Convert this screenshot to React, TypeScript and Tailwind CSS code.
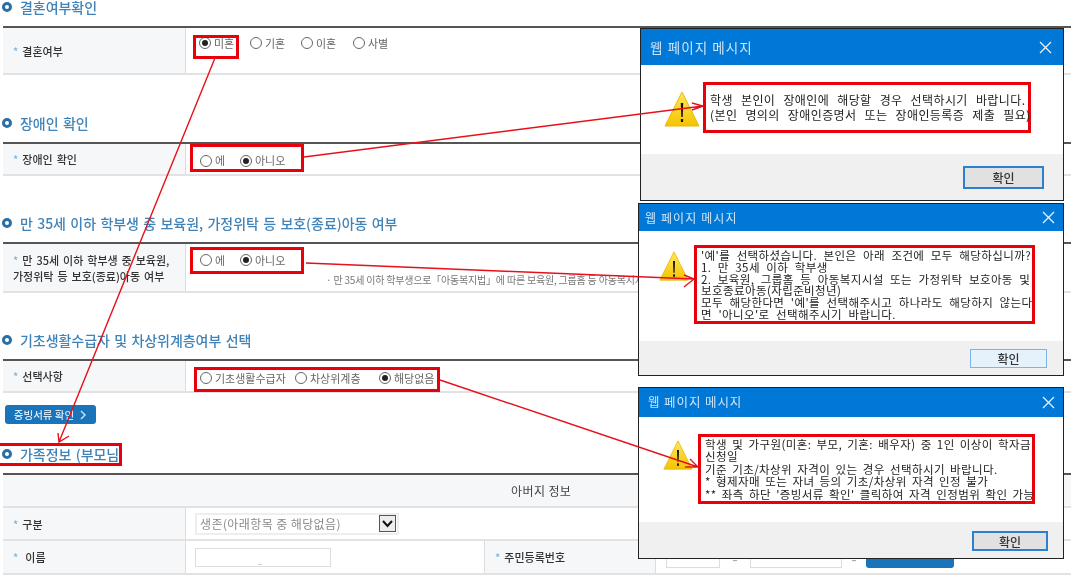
import type { ReactNode } from 'react'

const font = { fontFamily: '"Noto Sans CJK KR", "Noto Sans", sans-serif' }

function Heading({ children, className = '' }: { children: ReactNode; className?: string }) {
  return (
    <div className={`flex h-5 items-center pl-[2px] mb-[9px] ${className}`}>
      <span className="h-[10px] w-[10px] rounded-full border-[3px] border-[#2a6ea6]" />
      <span className="ml-2 whitespace-nowrap text-[14px] font-medium tracking-[-0.05px] [word-spacing:1.3px] text-[#3f83b8]">{children}</span>
    </div>
  )
}

function Radio({ label, checked, className = '' }: { label: string; checked?: boolean; className?: string }) {
  return (
    <div className={`flex items-center ${className}`}>
      <span className="flex h-[12px] w-[12px] shrink-0 items-center justify-center rounded-full border border-[#666] bg-white">
        {checked && <span className="h-[6px] w-[6px] rounded-full bg-[#222]" />}
      </span>
      <span className="ml-[3px] whitespace-nowrap text-[11px] tracking-[0px] text-[#666]">{label}</span>
    </div>
  )
}

function Label({ children, className = 'w-[183px]' }: { children: ReactNode; className?: string }) {
  return (
    <div className={`flex shrink-0 items-center border-r border-[#ddd] bg-[#f6f7f9] pl-[10px] text-[11px] font-medium leading-[16px] [word-spacing:1.5px] text-[#333] ${className}`}>
      <div>
        <span className="mr-[4px] text-[#7db4d8]">*</span>
        {children}
      </div>
    </div>
  )
}

function Row({ children, className = '' }: { children: ReactNode; className?: string }) {
  return <div className={`flex border-b-2 border-[#e2e2e2] ${className}`}>{children}</div>
}

function Warning({ className = '' }: { className?: string }) {
  return (
    <svg viewBox="0 0 36 36" className={`shrink-0 ${className}`}>
      <defs>
        <linearGradient id="warn" x1="0" y1="0" x2="0" y2="1">
          <stop offset="0" stopColor="#ffe85a" />
          <stop offset="1" stopColor="#f5c400" />
        </linearGradient>
      </defs>
      <path d="M18 1 L35 35 L1 35 Z" fill="url(#warn)" stroke="#e3b90f" strokeWidth="1" strokeLinejoin="round" />
      <path d="M16.8 12 h2.4 l-.5 14 h-1.4 Z" fill="#111" />
      <rect x="16.9" y="28" width="2.2" height="3" fill="#111" />
    </svg>
  )
}

function Dialog({
  className,
  titleClass,
  bodyClass,
  footerClass,
  buttonClass,
  titleText,
  children,
  icon,
}: {
  className: string
  titleClass: string
  bodyClass: string
  footerClass: string
  buttonClass: string
  titleText: string
  children: ReactNode
  icon: ReactNode
}) {
  return (
    <div className={`absolute flex flex-col border border-[#222] bg-white ${className}`}>
      <div className={`flex items-center justify-between bg-[#0078d7] ${titleClass}`}>
        <span className={`text-[#cfe4f7] ${titleText}`}>웹 페이지 메시지</span>
        <svg width="13" height="13" viewBox="0 0 13 13" stroke="#e8f2fb" strokeWidth="1.3" fill="none">
          <path d="M1 1 L12 12 M12 1 L1 12" />
        </svg>
      </div>
      <div className={`flex ${bodyClass}`}>
        {icon}
        {children}
      </div>
      <div className={`flex justify-end bg-[#f0f0f0] ${footerClass}`}>
        <button className={`text-[12px] font-medium text-[#333] ${buttonClass}`}>확인</button>
      </div>
    </div>
  )
}

export default function App() {
  const msg = 'border-[3px] border-[#e8000b] text-[#222] whitespace-nowrap'
  const box = 'absolute border-[3px] border-[#e8000b]'
  return (
    <div className="relative h-[577px] w-[1071px] overflow-hidden bg-white blur-[0.3px]" style={font}>
      <div className="-mt-[3px] flex flex-col pl-[3px]">
        <Heading className="-ml-[3px]">결혼여부확인</Heading>
        <div className="border-t-2 border-[#555]">
          <Row className="h-[47px]">
            <Label>결혼여부</Label>
            <div className="flex items-start pl-[13px] pt-[7px]">
              <Radio label="미혼" checked className="w-[51px]" />
              <Radio label="기혼" className="w-[51px]" />
              <Radio label="이혼" className="w-[52px]" />
              <Radio label="사별" />
            </div>
          </Row>
        </div>

        <Heading className="-ml-[3px] mt-[38px]">장애인 확인</Heading>
        <div className="border-t-2 border-[#555]">
          <Row className="h-[32px]">
            <Label>장애인 확인</Label>
            <div className="flex items-center pl-[14px] pt-[3px]">
              <Radio label="에" className="w-[40px]" />
              <Radio label="아니오" checked />
            </div>
          </Row>
        </div>

        <Heading className="-ml-[3px] mt-[37px]">만 35세 이하 학부생 중 보육원, 가정위탁 등 보호(종료)아동 여부</Heading>
        <div className="border-t-2 border-[#555]">
          <Row className="h-[49px]">
            <Label>
              만 35세 이하 학부생 중 보육원,
              <br />
              가정위탁 등 보호(종료)아동 여부
            </Label>
            <div className="flex flex-col pl-[14px] pt-[8px]">
              <div className="flex items-center">
                <Radio label="에" className="w-[40px]" />
                <Radio label="아니오" checked />
              </div>
              <div className="ml-[126px] mt-[3px] whitespace-nowrap text-[10px] tracking-[-0.2px] text-[#777]">· 만 35세 이하 학부생으로「아동복지법」에 따른 보육원, 그룹홈 등 아동복지시설</div>
            </div>
          </Row>
        </div>

        <Heading className="-ml-[3px] mt-[37px]">기초생활수급자 및 차상위계층여부 선택</Heading>
        <div className="border-t-2 border-[#555]">
          <Row className="h-[32px]">
            <Label>선택사항</Label>
            <div className="flex items-center pl-[14px] pt-[4px]">
              <Radio label="기초생활수급자" className="w-[95px]" />
              <Radio label="차상위계층" className="w-[84px]" />
              <Radio label="해당없음" checked />
            </div>
          </Row>
        </div>

        <button className="ml-[2px] mt-[12px] flex h-[19px] w-[91px] items-center justify-center rounded-[3px] bg-[#1a74ba] text-[10.5px] text-white">
          증빙서류 확인
          <svg width="7" height="10" viewBox="0 0 7 10" fill="none" stroke="#cfe4f7" strokeWidth="1.4" className="ml-[6px]">
            <path d="M1 1 L5 5 L1 9" />
          </svg>
        </button>

        <Heading className="-ml-[3px] mt-[20px]">가족정보 (부모님</Heading>
        <div className="border-t-2 border-[#555]">
          <Row className="h-[33px] items-center bg-[#f6f7f9]">
            <span className="ml-[508px] text-[12px] tracking-[0.4px] text-[#444]">아버지 정보</span>
          </Row>
          <Row className="h-[33px]">
            <Label>구분</Label>
            <div className="flex items-center pl-[9px]">
              <div className="flex h-[22px] w-[204px] items-center justify-between border-2 border-[#eee] bg-white pl-[3px] pr-[1px] text-[12px] tracking-[0.4px] text-[#888]">
                생존(아래항목 중 해당없음)
                <span className="flex h-[17px] w-[17px] items-center justify-center border border-[#555] bg-[#eee]">
                  <svg width="11" height="8" viewBox="0 0 11 8" fill="none" stroke="#111" strokeWidth="2">
                    <path d="M1 1 L5.5 6 L10 1" />
                  </svg>
                </span>
              </div>
            </div>
          </Row>
          <Row className="h-[34px]">
            <Label className="w-[183px] [&_span]:mr-[7px]">이름</Label>
            <div className="flex w-[299px] shrink-0 items-center border-r border-[#ddd] pl-[9px]">
              <div className="flex h-[19px] w-[136px] items-end justify-center border border-[#ddd] pb-[1px] pr-[6px] text-[8px] leading-none text-[#aaa]">_</div>
            </div>
            <Label className="w-[171px]">주민등록번호</Label>
            <div className="flex items-center pl-[10px] pt-[1px]">
              <div className="h-[20px] w-[54px] border border-[#ddd]" />
              <span className="w-[30px] text-center text-[#aaa]">-</span>
              <div className="h-[20px] w-[92px] border border-[#ddd]" />
              <span className="w-[24px] text-center text-[#aaa]">-</span>
              <div className="h-[20px] w-[88px] rounded-[3px] bg-[#1a74ba]" />
            </div>
          </Row>
        </div>
      </div>

      <div className={`${box} left-[193px] top-[35px] h-[24px] w-[46px]`} />
      <div className={`${box} left-[190px] top-[144px] h-[28px] w-[114px]`} />
      <div className={`${box} left-[190px] top-[247px] h-[27px] w-[114px]`} />
      <div className={`${box} left-[194px] top-[367px] h-[25px] w-[246px]`} />
      <div className={`${box} left-[-3px] top-[443px] h-[23px] w-[125px]`} />

      <Dialog
        className="left-[640px] top-[28px] h-[173px] w-[424px]"
        titleClass="h-[36px] pl-[9px] pr-[11px]"
        titleText="text-[13.5px] tracking-[1.1px]"
        bodyClass="h-[89px] items-start pl-[23px] pt-[17px]"
        footerClass="h-[46px] pr-[19px] pt-[12px]"
        buttonClass="h-[23px] w-[81px] border-2 border-[#2f80cc] bg-[#e1e1e1]"
        icon={<Warning className="mt-[9px] h-[36px] w-[36px]" />}
      >
        <div className={`ml-[3px] h-[51px] w-[328px] pl-[4px] pt-[7px] text-[12px] leading-[15px] tracking-[0.4px] [word-spacing:5px] ${msg}`}>
          학생 본인이 장애인에 해당할 경우 선택하시기 바랍니다.
          <br />
          (본인 명의의 장애인증명서 또는 장애인등록증 제출 필요)
        </div>
      </Dialog>

      <Dialog
        className="left-[638px] top-[203px] h-[173px] w-[426px]"
        titleClass="h-[27px] pl-[6px] pr-[8px]"
        titleText="text-[12px] tracking-[1.1px]"
        bodyClass="h-[110px] items-start pl-[18px] pt-[14px]"
        footerClass="h-[34px] pr-[16px] pt-[8px]"
        buttonClass="h-[19px] w-[77px] border border-[#7eb4ea] bg-[#e5f1fb]"
        icon={<Warning className="mt-[6px] h-[30px] w-[34px]" />}
      >
        <div className={`ml-[3px] h-[79px] w-[341px] pl-[4px] pt-[2px] text-[11.5px] leading-[11.8px] tracking-[0.4px] [word-spacing:3.5px] ${msg}`}>
          '예'를 선택하셨습니다. 본인은 아래 조건에 모두 해당하십니까?
          <br />
          1. 만 35세 이하 학부생
          <br />
          2. 보육원, 그룹홈 등 아동복지시설 또는 가정위탁 보호아동 및
          <br />
          보호종료아동(자립준비청년)
          <br />
          모두 해당한다면 '예'를 선택해주시고 하나라도 해당하지 않는다
          <br />
          면 '아니오'로 선택해주시기 바랍니다.
        </div>
      </Dialog>

      <Dialog
        className="left-[638px] top-[387px] h-[172px] w-[426px]"
        titleClass="h-[29px] pl-[9px] pr-[8px]"
        titleText="text-[12.5px] tracking-[0.9px]"
        bodyClass="h-[105px] items-start pl-[22px] pt-[17px]"
        footerClass="h-[36px] pr-[15px] pt-[9px]"
        buttonClass="h-[20px] w-[76px] border-2 border-[#2f80cc] bg-[#e1e1e1]"
        icon={<Warning className="mt-[6px] h-[30px] w-[34px]" />}
      >
        <div className={`ml-[3px] h-[70px] w-[337px] pl-[4px] pt-[1px] text-[11.5px] leading-[12.4px] tracking-[0.42px] [word-spacing:2.2px] ${msg}`}>
          학생 및 가구원(미혼: 부모, 기혼: 배우자) 중 1인 이상이 학자금
          <br />
          신청일
          <br />
          기준 기초/차상위 자격이 있는 경우 선택하시기 바랍니다.
          <br />
          * 형제자매 또는 자녀 등의 기초/차상위 자격 인정 불가
          <br />
          ** 좌측 하단 '증빙서류 확인' 클릭하여 자격 인정범위 확인 가능
        </div>
      </Dialog>

      <svg className="pointer-events-none absolute left-0 top-0 h-[577px] w-[1071px]" viewBox="0 0 1071 577" fill="none" stroke="#e8101a" strokeWidth="1.4">
        <path d="M215 58 L59 442 M58 433 L59 442 L69 436" />
        <path d="M304 157 L703 106 M692 103 L703 106 L692 110" />
        <path d="M306 263 L694 279 M684 275 L694 279 L684 287" />
        <path d="M440 380 L698 467 M690 459 L698 467 L685 467" />
      </svg>
    </div>
  )
}
